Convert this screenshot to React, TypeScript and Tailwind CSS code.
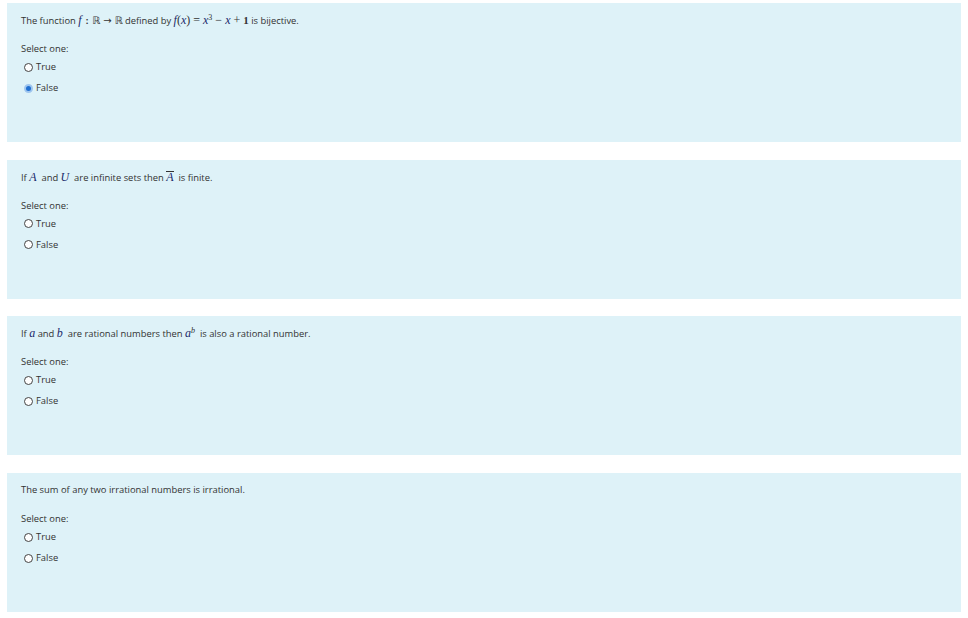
import type { ReactNode } from "react";

type Question = {
  text: ReactNode;
  answer: "True" | "False" | null;
};

const M = ({ children }: { children: ReactNode }) => (
  <span className="font-['Liberation_Serif',serif] text-[12px] italic text-[#1a2a6c]">{children}</span>
);

const Op = ({ children }: { children: ReactNode }) => (
  <span className="mx-[3px] font-['Liberation_Serif',serif] text-[12px]">{children}</span>
);

const questions: Question[] = [
  {
    text: (
      <>
        The function <M>f</M>
        <span className="mx-[4px] font-bold">:</span>
        <span className="font-['DejaVu_Sans',sans-serif] text-[10px]">ℝ</span>
        <span className="mx-[3px] font-['DejaVu_Sans',sans-serif] text-[10px]">→</span>
        <span className="font-['DejaVu_Sans',sans-serif] text-[10px]">ℝ</span> defined by <M>f</M>
        <span className="font-['Liberation_Serif',serif] text-[12px]">(</span>
        <M>x</M>
        <span className="font-['Liberation_Serif',serif] text-[12px]">)</span>
        <Op>=</Op>
        <M>x</M>
        <sup className="font-['Liberation_Serif',serif] text-[8px]">3</sup>
        <Op>−</Op>
        <M>x</M>
        <Op>+</Op>
        <span className="font-['Liberation_Serif',serif] text-[11px] font-bold">1</span> is bijective.
      </>
    ),
    answer: "False",
  },
  {
    text: (
      <>
        If <M>A</M>&nbsp; and <M>U</M>&nbsp; are infinite sets then{" "}
        <span className="inline-block border-t border-[#333] leading-[11px]">
          <M>A</M>
        </span>
        &nbsp; is finite.
      </>
    ),
    answer: null,
  },
  {
    text: (
      <>
        If <M>a</M> and <M>b</M>&nbsp; are rational numbers then <M>a</M>
        <sup className="font-['Liberation_Serif',serif] text-[8px] italic">b</sup>&nbsp; is also a rational number.
      </>
    ),
    answer: null,
  },
  {
    text: <>The sum of any two irrational numbers is irrational.</>,
    answer: null,
  },
];

function Radio({ checked }: { checked: boolean }) {
  return checked ? (
    <span className="box-border inline-block h-[9px] w-[9px] rounded-full border-[2px] border-[#9fc6ef] bg-[#1f6fd1]" />
  ) : (
    <span className="box-border inline-block h-[9px] w-[9px] rounded-full border border-[#444] bg-white" />
  );
}

function Option({ label, checked, className }: { label: string; checked: boolean; className: string }) {
  return (
    <div className={`flex h-[14px] items-center gap-[3px] pl-[3px] ${className}`}>
      <Radio checked={checked} />
      <span>{label}</span>
    </div>
  );
}

export default function App() {
  return (
    <div className="flex min-h-[618px] flex-col gap-[17.7px] bg-white px-[7px] pt-[3px] font-['Open_Sans',sans-serif] text-[9.4px] text-[#333]">
      {questions.map((q, i) => (
        <section key={i} className="h-[139px] bg-[#def2f8] pl-[14px] pt-[10px]">
          <p className="h-[14px] leading-[14px]">{q.text}</p>
          <div className="mt-[15px] flex h-[14px] items-center">Select one:</div>
          <Option label="True" checked={q.answer === "True"} className="mt-[4px]" />
          <Option label="False" checked={q.answer === "False"} className="mt-[7px]" />
        </section>
      ))}
    </div>
  );
}
